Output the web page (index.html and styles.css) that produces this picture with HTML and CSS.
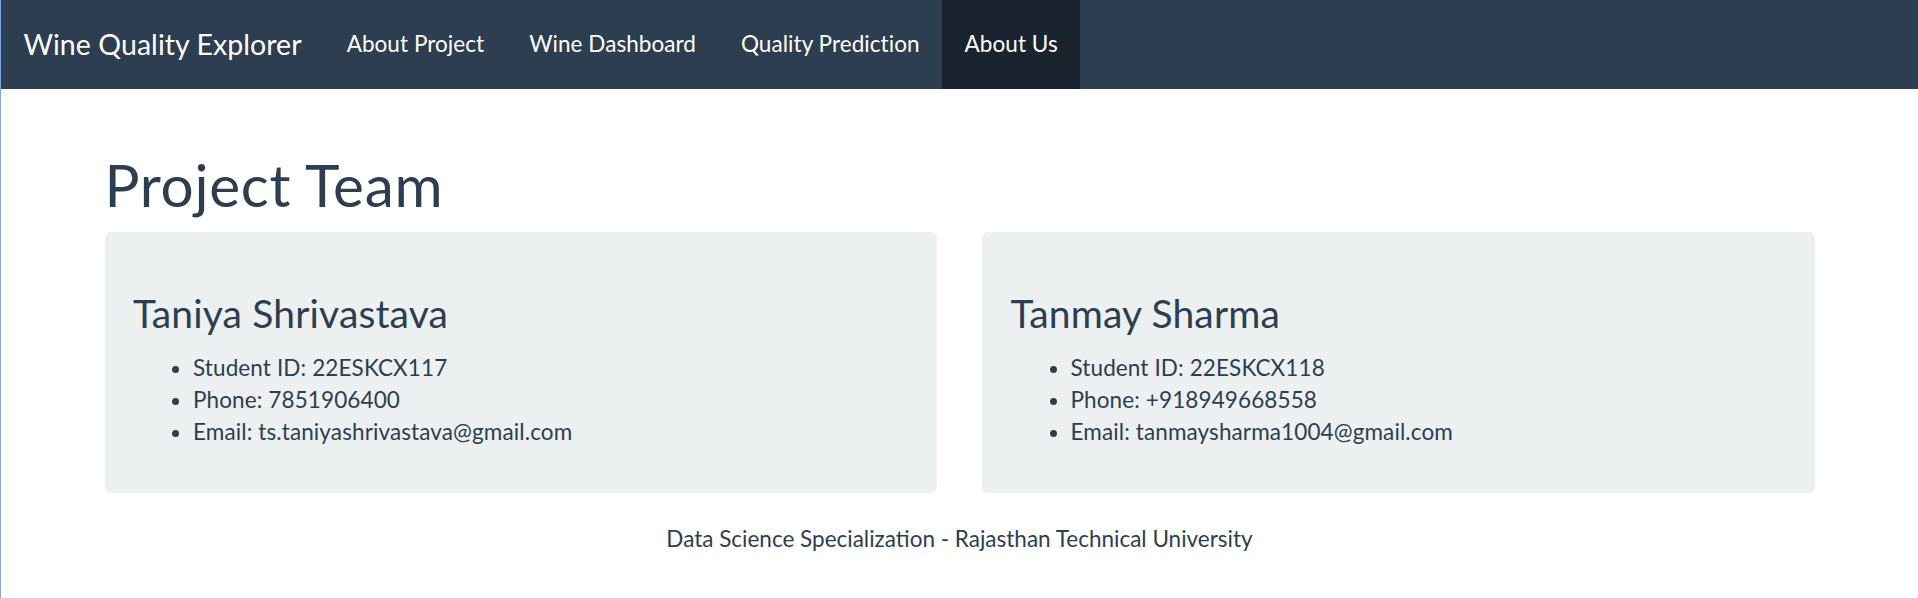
FILE: index.html
```html
<!DOCTYPE html>
<html lang="en">
<head>
<meta charset="utf-8">
<title>Wine Quality Explorer</title>
<link rel="stylesheet" href="styles.css">
</head>
<body>
<nav class="navbar">
  <span class="brand">Wine Quality Explorer</span>
  <ul class="nav">
    <li><a href="#">About Project</a></li>
    <li><a href="#">Wine Dashboard</a></li>
    <li><a href="#">Quality Prediction</a></li>
    <li class="active"><a href="#">About Us</a></li>
  </ul>
</nav>
<main class="container">
  <h1 class="title">Project Team</h1>
  <div class="row">
    <div class="col">
      <div class="well">
        <h3 class="name">Taniya Shrivastava</h3>
        <ul class="info">
          <li>Student ID: 22ESKCX117</li>
          <li>Phone: 7851906400</li>
          <li>Email: ts.taniyashrivastava@gmail.com</li>
        </ul>
      </div>
    </div>
    <div class="col">
      <div class="well">
        <h3 class="name">Tanmay Sharma</h3>
        <ul class="info">
          <li>Student ID: 22ESKCX118</li>
          <li>Phone: +918949668558</li>
          <li>Email: tanmaysharma1004@gmail.com</li>
        </ul>
      </div>
    </div>
  </div>
  <p class="footer">Data Science Specialization - Rajasthan Technical University</p>
</main>
</body>
</html>
```
FILE: styles.css
```css
html {
  background: #ffffff;
}
body {
  margin: 0;
  min-height: 100vh;
  box-sizing: border-box;
  border-left: 1px solid #86a8e2;
  font-family: Lato, "Noto Sans", sans-serif;
  font-size: 22.5px;
  line-height: 32.14px;
  color: #2c3e50;
  background: #ffffff;
}
.navbar {
  display: flex;
  align-items: stretch;
  height: 89px;
  background: #2c3e50;
  margin-bottom: 31.5px;
  letter-spacing: 0.0025em;
}
.brand {
  display: block;
  padding: 29px 22.5px 30px;
  font-size: 28.5px;
  line-height: 30px;
  color: #ffffff;
}
.nav {
  display: flex;
  margin: 0;
  padding: 0;
  list-style: none;
}
.nav li {
  display: flex;
}
.nav a {
  display: block;
  padding: 29px 22.5px 30px;
  line-height: 30px;
  color: #ffffff;
  text-decoration: none;
}
.nav li.active a {
  background: #1a242f;
}
.container {
  display: flow-root;
  width: 1755px;
  margin: 0 auto;
  padding: 0 22.5px;
  box-sizing: border-box;
}
.title {
  margin: 31.5px 0 15.75px;
  font-size: 58.5px;
  line-height: 64.35px;
  font-weight: 400;
  letter-spacing: 0.012em;
}
.row {
  display: flex;
  gap: 45px;
}
.col {
  flex: 1 1 0;
}
.well {
  background: #ecf0f1;
  border-radius: 6px;
  padding: 28.5px;
  margin-bottom: 30px;
}
.name {
  margin: 31.5px 0 16.75px;
  font-size: 39px;
  line-height: 42.9px;
  font-weight: 400;
  letter-spacing: 0.004em;
}
.info {
  margin: 0 0 16.75px;
  padding-left: 60px;
  letter-spacing: 0.005em;
}
.footer {
  margin: 0;
  text-align: center;
}
```
